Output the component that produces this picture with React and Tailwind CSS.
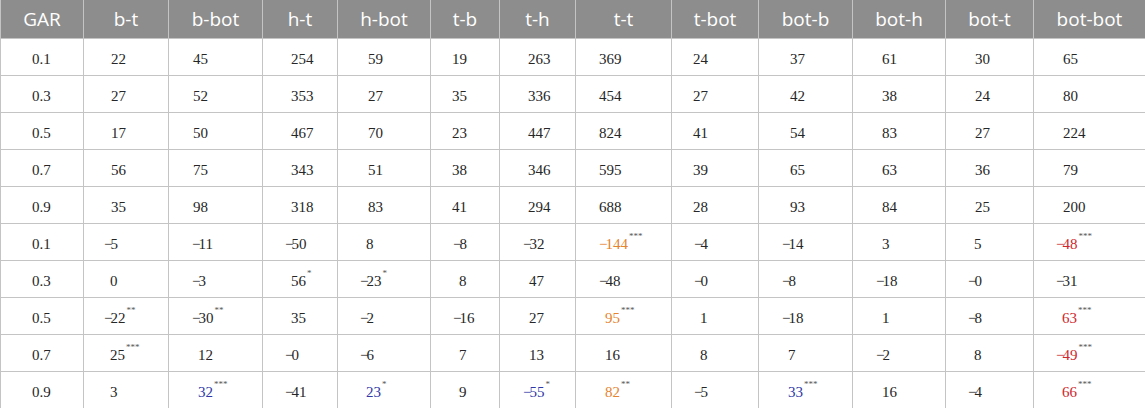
import React from "react";

const headers = ["GAR", "b-t", "b-bot", "h-t", "h-bot", "t-b", "t-h", "t-t", "t-bot", "bot-b", "bot-h", "bot-t", "bot-bot"];
const colW = ["w-[83px]", "w-[85px]", "w-[94px]", "w-[75px]", "w-[93px]", "w-[69px]", "w-[76px]", "w-[96px]", "w-[87px]", "w-[94px]", "w-[93px]", "w-[88px]", "w-[112px]"];

const upperPad = ["pl-[31px]", "pl-[27px]", "pl-[24px]", "pl-[28px]", "pl-[30px]", "pl-[21px]", "pl-[28px]", "pl-[23px]", "pl-[21px]", "pl-[31px]", "pl-[29px]", "pl-[29px]", "pl-[29px]"];
const lowerPad = ["pl-[31px]", "pl-[26px]", "pl-[29px]", "pl-[28px]", "pl-[28px]", "pl-[28px]", "pl-[29px]", "pl-[29px]", "pl-[28px]", "pl-[29px]", "pl-[29px]", "pl-[28px]", "pl-[28px]"];

const colorCls = {
  o: "text-[#e5832f]",
  r: "text-[#d0262b]",
  b: "text-[#2f38a8]",
  k: "text-[#262626]",
};

const upper = [
  ["0.1", "22", "45", "254", "59", "19", "263", "369", "24", "37", "61", "30", "65"],
  ["0.3", "27", "52", "353", "27", "35", "336", "454", "27", "42", "38", "24", "80"],
  ["0.5", "17", "50", "467", "70", "23", "447", "824", "41", "54", "83", "27", "224"],
  ["0.7", "56", "75", "343", "51", "38", "346", "595", "39", "65", "63", "36", "79"],
  ["0.9", "35", "98", "318", "83", "41", "294", "688", "28", "93", "84", "25", "200"],
];
const lower = [
  ["0.1", "-5", "-11", "-50", "8", "-8", "-32", "o:-144|***", "-4", "-14", "3", "5", "r:-48|***"],
  ["0.3", "0", "-3", "56|*", "-23|*", "8", "47", "-48", "-0", "-8", "-18", "-0", "-31"],
  ["0.5", "-22|**", "-30|**", "35", "-2", "-16", "27", "o:95|***", "1", "-18", "1", "-8", "r:63|***"],
  ["0.7", "25|***", "12", "-0", "-6", "7", "13", "16", "8", "7", "-2", "8", "r:-49|***"],
  ["0.9", "3", "b:32|***", "-41", "b:23|*", "9", "b:-55|*", "o:82|**", "-5", "b:33|***", "16", "-4", "r:66|***"],
];

function Cell({ raw, pad }) {
  let color = "k";
  let s = raw;
  if (/^[orb]:/.test(s)) {
    color = s[0];
    s = s.slice(2);
  }
  let stars = "";
  if (s.includes("|")) {
    [s, stars] = s.split("|");
  }
  const neg = s.startsWith("-");
  const digits = neg ? s.slice(1) : s;
  return (
    <td className={`${pad} pt-[5px] border border-[#c4c4c4] align-middle text-left whitespace-nowrap`}>
      <span className={`relative ${colorCls[color]}`}>
        {neg && <span className="-ml-[6px] mr-[-2px]">−</span>}
        {digits}
        {stars && (
          <span className="absolute left-full top-[-4px] ml-[1px] text-[9px] leading-none text-[#555555] whitespace-nowrap">
            {stars}
          </span>
        )}
      </span>
    </td>
  );
}

export default function App() {
  return (
    <div className="w-[1145px] h-[408px] overflow-hidden bg-white">
      <table className="table-fixed border-collapse w-[1145px] font-['Liberation_Serif',serif] text-[15px]">
        <colgroup>
          {colW.map((w, i) => (
            <col key={i} className={w} />
          ))}
        </colgroup>
        <thead>
          <tr className="h-[38px] bg-[#8d8d8d]">
            {headers.map((h, i) => (
              <th
                key={i}
                className="border-x border-[#c4c4c4] text-center font-normal text-white text-[19px] font-['Open_Sans',sans-serif] align-middle"
              >
                {h}
              </th>
            ))}
          </tr>
        </thead>
        <tbody>
          {upper.map((row, r) => (
            <tr key={"u" + r} className="h-[37px]">
              {row.map((v, i) => (
                <Cell key={i} raw={v} pad={upperPad[i]} />
              ))}
            </tr>
          ))}
          {lower.map((row, r) => (
            <tr key={"l" + r} className="h-[37px]">
              {row.map((v, i) => (
                <Cell key={i} raw={v} pad={lowerPad[i]} />
              ))}
            </tr>
          ))}
        </tbody>
      </table>
    </div>
  );
}
